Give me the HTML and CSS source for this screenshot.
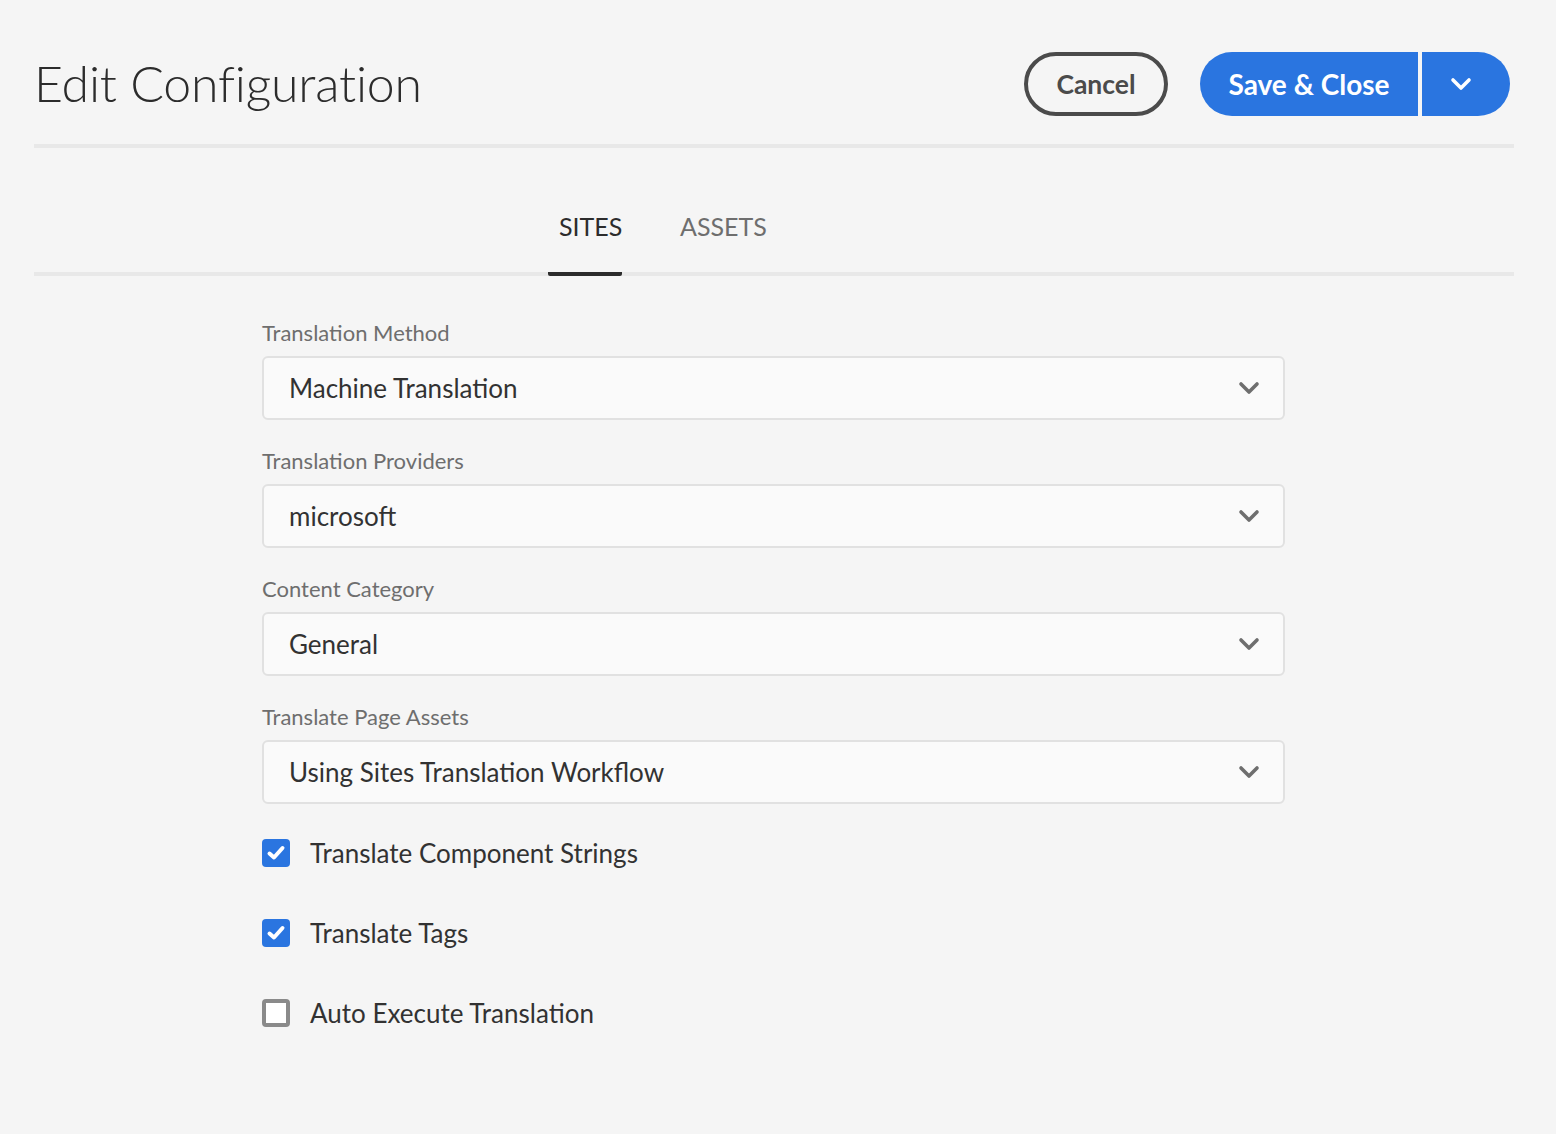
FILE: index.html
```html
<!DOCTYPE html>
<html lang="en">
<head>
<meta charset="utf-8">
<title>Edit Configuration</title>
<link rel="stylesheet" href="styles.css">
</head>
<body>
<div class="page">
  <header class="header">
    <h1 class="title">Edit Configuration</h1>
    <div class="actions">
      <button class="btn btn-secondary">Cancel</button>
      <div class="split">
        <button class="btn btn-primary split-main">Save &amp; Close</button>
        <button class="btn btn-primary split-toggle" aria-label="More">
          <svg width="22" height="14" viewBox="0 0 22 14"><path d="M3 3 L11 11 L19 3" fill="none" stroke="#fff" stroke-width="3.6" stroke-linecap="round" stroke-linejoin="round"/></svg>
        </button>
      </div>
    </div>
  </header>

  <nav class="tabs">
    <div class="tab tab-active">SITES</div>
    <div class="tab">ASSETS</div>
  </nav>

  <form class="form">
    <div class="field">
      <label class="label">Translation Method</label>
      <div class="select">
        <span class="select-value">Machine Translation</span>
        <svg class="chev" width="22" height="14" viewBox="0 0 22 14"><path d="M3 3 L11 11 L19 3" fill="none" stroke="#6e6e6e" stroke-width="3.6" stroke-linecap="round" stroke-linejoin="round"/></svg>
      </div>
    </div>
    <div class="field">
      <label class="label">Translation Providers</label>
      <div class="select">
        <span class="select-value">microsoft</span>
        <svg class="chev" width="22" height="14" viewBox="0 0 22 14"><path d="M3 3 L11 11 L19 3" fill="none" stroke="#6e6e6e" stroke-width="3.6" stroke-linecap="round" stroke-linejoin="round"/></svg>
      </div>
    </div>
    <div class="field">
      <label class="label">Content Category</label>
      <div class="select">
        <span class="select-value">General</span>
        <svg class="chev" width="22" height="14" viewBox="0 0 22 14"><path d="M3 3 L11 11 L19 3" fill="none" stroke="#6e6e6e" stroke-width="3.6" stroke-linecap="round" stroke-linejoin="round"/></svg>
      </div>
    </div>
    <div class="field">
      <label class="label">Translate Page Assets</label>
      <div class="select">
        <span class="select-value">Using Sites Translation Workflow</span>
        <svg class="chev" width="22" height="14" viewBox="0 0 22 14"><path d="M3 3 L11 11 L19 3" fill="none" stroke="#6e6e6e" stroke-width="3.6" stroke-linecap="round" stroke-linejoin="round"/></svg>
      </div>
    </div>

    <div class="checks">
      <div class="check">
        <span class="box box-on">
          <svg width="20" height="18" viewBox="0 0 20 18"><path d="M3.5 9.5 L8 13.5 L16.5 4" fill="none" stroke="#fff" stroke-width="4" stroke-linecap="round" stroke-linejoin="round"/></svg>
        </span>
        <span class="check-label">Translate Component Strings</span>
      </div>
      <div class="check">
        <span class="box box-on">
          <svg width="20" height="18" viewBox="0 0 20 18"><path d="M3.5 9.5 L8 13.5 L16.5 4" fill="none" stroke="#fff" stroke-width="4" stroke-linecap="round" stroke-linejoin="round"/></svg>
        </span>
        <span class="check-label">Translate Tags</span>
      </div>
      <div class="check">
        <span class="box box-off"></span>
        <span class="check-label">Auto Execute Translation</span>
      </div>
    </div>
  </form>
</div>
</body>
</html>
```

FILE: styles.css
```css
* { box-sizing: border-box; }

html, body {
  margin: 0;
  padding: 0;
  background: #f5f5f5;
}

body {
  font-family: "Lato", "Open Sans", sans-serif;
  color: #2c2c2c;
}

.page {
  padding: 0 42px 0 34px;
}

.header {
  display: flex;
  align-items: center;
  justify-content: space-between;
  padding: 52px 4px 28px 0;
  border-bottom: 4px solid #e8e8e8;
}

.title {
  margin: 0;
  font-size: 50px;
  font-weight: 300;
  line-height: 64px;
  color: #2c2c2c;
  letter-spacing: -0.2px;
  position: relative;
  top: -1px;
}

.actions {
  display: flex;
  align-items: center;
  gap: 32px;
}

.btn {
  font-family: inherit;
  height: 64px;
  border-radius: 32px;
  font-size: 28px;
  font-weight: 700;
  cursor: pointer;
  display: flex;
  align-items: center;
  justify-content: center;
}

.btn-secondary {
  width: 144px;
  background: transparent;
  border: 4px solid #4b4b4b;
  color: #4b4b4b;
  font-size: 26.5px;
}

.split {
  display: flex;
  gap: 4px;
}

.btn-primary {
  background: #2a75e0;
  border: none;
  color: #fff;
}

.split-main {
  width: 218px;
  border-radius: 32px 0 0 32px;
}

.split-toggle {
  width: 88px;
  border-radius: 0 32px 32px 0;
  padding: 0 10px 0 0;
}

.tabs {
  display: flex;
  padding-left: 514px;
  gap: 58px;
  border-bottom: 4px solid #e8e8e8;
  height: 128px;
  align-items: flex-end;
}

.tab {
  font-size: 25px;
  color: #6e6e6e;
  padding: 0 0 30px 0;
  line-height: 32px;
  position: relative;
  top: 4px;
  border-bottom: 4px solid transparent;
}

.tab-active {
  color: #2c2c2c;
  padding-left: 11px;
  width: 74px;
  border-bottom-color: #2c2c2c;
  border-radius: 2px;
}

.form {
  padding: 42px 0 0 228px;
}

.field {
  display: flex;
  flex-direction: column;
  width: 1023px;
  margin-bottom: 26px;
}

.label {
  font-size: 22px;
  color: #6e6e6e;
  line-height: 30px;
  margin-bottom: 8px;
}

.select {
  height: 64px;
  background: #fafafa;
  border: 2px solid #e1e1e1;
  border-radius: 6px;
  display: flex;
  align-items: center;
  justify-content: space-between;
  padding: 0 23px 0 25px;
}

.select-value {
  font-size: 26px;
  color: #323232;
}

.chev {
  display: block;
}

.checks {
  display: flex;
  flex-direction: column;
  gap: 52px;
  padding-top: 9px;
}

.check {
  display: flex;
  align-items: center;
  gap: 20px;
  height: 28px;
}

.box {
  width: 28px;
  height: 28px;
  border-radius: 4px;
  display: flex;
  align-items: center;
  justify-content: center;
  flex: none;
}

.box-on {
  background: #2a75e0;
}

.box-off {
  background: #fff;
  border: 4px solid #8a8a8a;
}

.check-label {
  font-size: 26px;
  color: #323232;
}
```
